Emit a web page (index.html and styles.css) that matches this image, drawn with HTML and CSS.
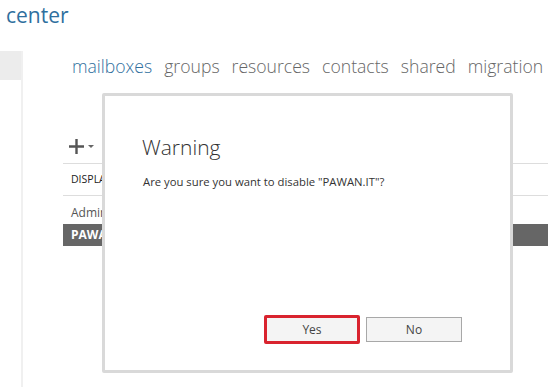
FILE: index.html
```html
<!DOCTYPE html>
<html>
<head>
    <meta charset="UTF-8">
    <title>Exchange admin center</title>
    <link rel="stylesheet" href="styles.css">
</head>
<body>
    <div class="brand">center</div>

    <div class="layout">
        <div class="sidebar">
            <div class="side-item"></div>
        </div>

        <div class="main">
            <ul class="tabs">
                <li class="active">mailboxes</li>
                <li>groups</li>
                <li>resources</li>
                <li>contacts</li>
                <li>shared</li>
                <li>migration</li>
            </ul>

            <div class="toolbar">
                <svg class="plus" width="15" height="15" viewBox="0 0 15 15">
                    <path d="M7.5 0 V15 M0 7.5 H15" stroke="#555" stroke-width="2.4" fill="none"/>
                </svg>
                <span class="caret"></span>
            </div>

            <div class="grid">
                <div class="grid-head">DISPLAY NAME</div>
                <div class="grid-row">Administrator</div>
                <div class="grid-row selected">PAWAN.IT</div>
            </div>
        </div>
    </div>

    <div class="dialog">
        <h2>Warning</h2>
        <p>Are you sure you want to disable "PAWAN.IT"?</p>
        <div class="buttons">
            <button class="btn btn-focus">Yes</button>
            <button class="btn">No</button>
        </div>
    </div>
</body>
</html>
```

FILE: styles.css
```css
body {
    margin: 0;
    font-family: "Open Sans", "Noto Sans", sans-serif;
    background: #fff;
    color: #333;
    overflow: hidden;
    height: 387px;
    position: relative;
}

.brand {
    height: 51px;
    padding-left: 6px;
    font-size: 21px;
    line-height: 30px;
    color: #2f6f9e;
}

.layout {
    display: flex;
    height: 336px;
}

.sidebar {
    width: 21px;
    border-right: 2px solid #f0f0f0;
}

.side-item {
    height: 29px;
    background: #ececec;
}

.main {
    flex: 1;
    padding-left: 40px;
}

.tabs {
    list-style: none;
    margin: 0;
    padding: 3px 0 0 9px;
    display: flex;
    gap: 12px;
    font-size: 17.6px;
    font-weight: 300;
    color: #666;
    white-space: nowrap;
}

.tabs .active {
    color: #2f6f9e;
}

.toolbar {
    margin-top: 54px;
    height: 31px;
    padding-left: 6px;
    display: flex;
    align-items: center;
}

.plus {
    display: block;
    margin-top: -2px;
}

.caret {
    margin-left: 4px;
    margin-top: -2px;
    border-left: 3px solid transparent;
    border-right: 3px solid transparent;
    border-top: 3px solid #666;
}

.grid {
    font-size: 12px;
}

.grid-head {
    border-top: 1px solid #ddd;
    border-bottom: 1px solid #ddd;
    height: 31px;
    line-height: 31px;
    padding-left: 8px;
    font-size: 10.5px;
    color: #222;
}

.grid-row {
    height: 25px;
    line-height: 34px;
    padding-left: 8px;
    color: #555;
}

.grid-row.selected {
    height: 22px;
    line-height: 22px;
    background: #666;
    color: #fff;
    font-weight: 700;
    margin-top: 3px;
}

.dialog {
    position: absolute;
    left: 102px;
    top: 93px;
    width: 405px;
    height: 274px;
    border: 3px solid #d9d9d9;
    border-radius: 2px;
    background: #fff;
    display: flex;
    flex-direction: column;
}

.dialog h2 {
    margin: 36px 0 0 37px;
    font-size: 21px;
    font-weight: 300;
    color: #333;
    line-height: 30px;
}

.dialog p {
    margin: 12px 0 0 38px;
    font-size: 11.3px;
    color: #333;
}

.buttons {
    margin-top: auto;
    margin-bottom: 26px;
    margin-right: 48px;
    display: flex;
    justify-content: flex-end;
    align-items: center;
    gap: 6px;
}

.btn {
    width: 96px;
    height: 25px;
    border: 1px solid #a8a8a8;
    background: #f4f4f4;
    font-family: "Open Sans", "Noto Sans", sans-serif;
    font-size: 12px;
    color: #444;
    padding: 0;
}

.btn-focus {
    height: 29px;
    border: 3px solid #d9232e;
    border-radius: 2px;
}
```
